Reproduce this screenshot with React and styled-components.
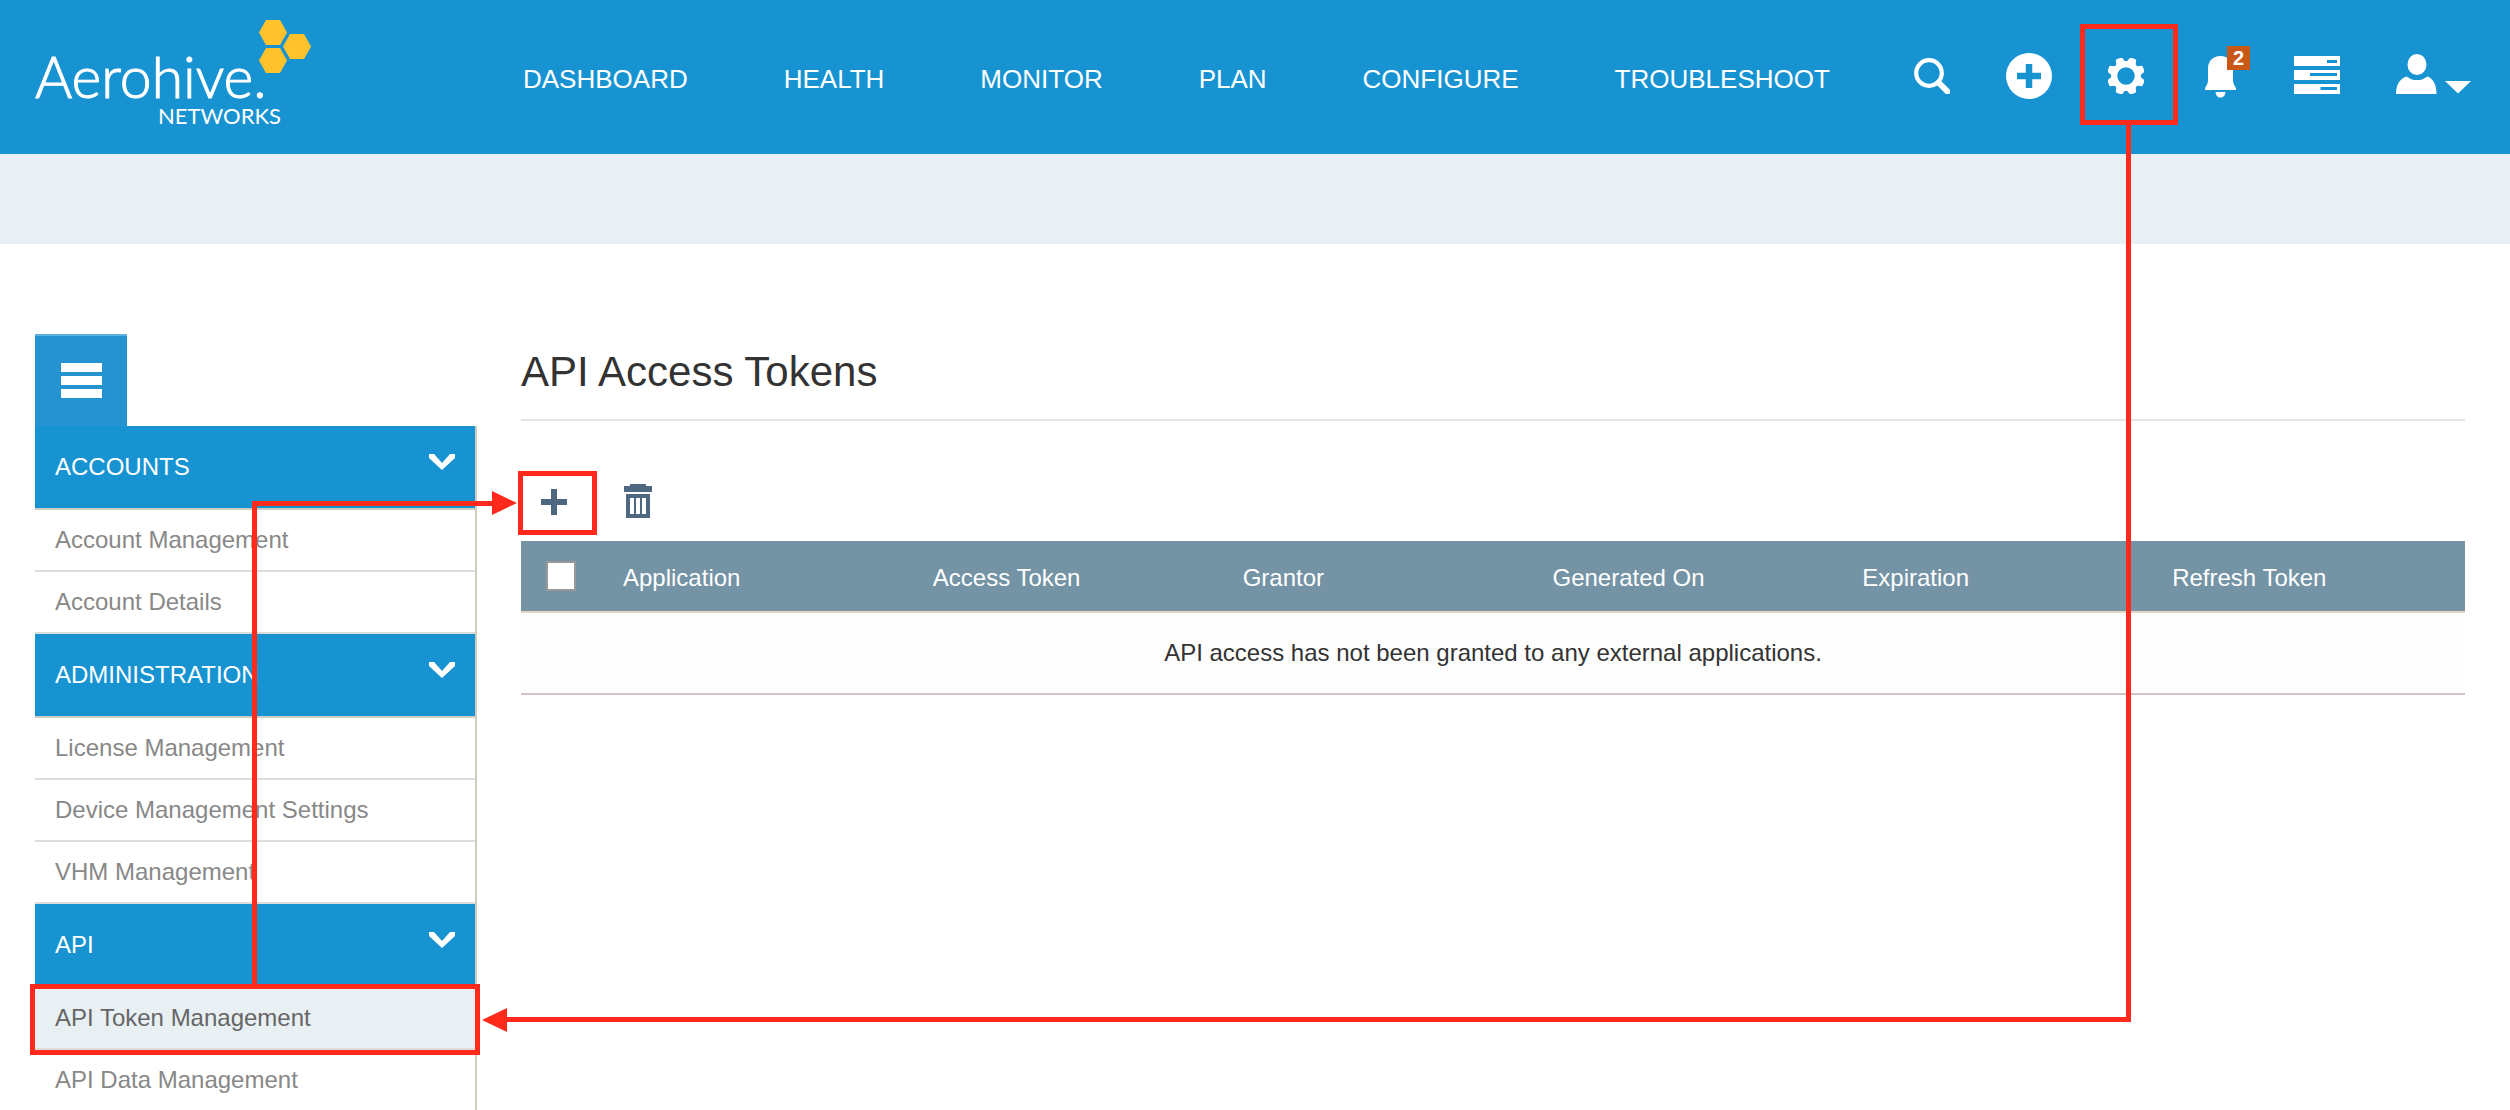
import React, { useState } from "react";
import styled, { createGlobalStyle, css } from "styled-components";

const color = {
  brand: "#1893d2",
  toggle: "#2493cf",
  band: "#e8f0f4",
  line: "#dedcd6",
  edge: "#cfcdc2",
  tableHead: "#7493a5",
  tool: "#4d6880",
  mark: "#ff2a1c",
};

const GlobalStyle = createGlobalStyle`
  *, *::before, *::after { box-sizing: border-box; }
  body {
    margin: 0;
    background: #fff;
    color: #333;
    font-family: "Liberation Sans", Arial, Helvetica, sans-serif;
    font-size: 24px;
    line-height: 28px;
  }
  button { font: inherit; border: 0; padding: 0; cursor: pointer; background: none; }
  svg { display: block; }
`;

const Page = styled.div`
  position: relative;
  min-height: 100vh;
`;

const Header = styled.header`
  display: flex;
  align-items: center;
  height: 154px;
  padding: 0 10px 0 35px;
  background: ${color.brand};
`;

const LogoLink = styled.a`
  flex: none;
  width: 488px;
`;

const Nav = styled.nav`
  display: flex;
  gap: 96px;
  padding-top: 3px;
`;

const NavLink = styled.a`
  color: #fff;
  font-size: 26px;
  line-height: 30px;
  text-decoration: none;
`;

const Actions = styled.div`
  display: flex;
  margin-left: auto;
  padding-bottom: 2px;
`;

const ActionButton = styled.button`
  position: relative;
  display: flex;
  align-items: center;
  justify-content: center;
  width: ${(p) => (p.$wide ? 132 : 97)}px;
  height: 102px;
`;

const Badge = styled.span`
  position: absolute;
  top: 21px;
  left: 53px;
  width: 23px;
  height: 24px;
  background: #c95718;
  color: #fff;
  font-size: 20px;
  font-weight: bold;
  line-height: 24px;
  text-align: center;
`;

const Band = styled.div`
  height: 90px;
  background: ${color.band};
`;

const Body = styled.div`
  display: flex;
  align-items: flex-start;
  gap: 44px;
  padding: 90px 45px 0 35px;
`;

const Sidebar = styled.aside`
  flex: none;
  width: 442px;
`;

const Toggle = styled.button`
  display: flex;
  align-items: center;
  justify-content: center;
  width: 92px;
  height: 92px;
  background: ${color.toggle};
  border-top: 2px solid #5cb0dc;
`;

const Menu = styled.div`
  border-right: 2px solid ${color.edge};
`;

const SectionButton = styled.button`
  display: flex;
  align-items: center;
  justify-content: space-between;
  width: 100%;
  height: 84px;
  padding: 0 20px;
  background: ${color.brand};
  border-bottom: 2px solid ${color.edge};
  color: #fff;
`;

const Items = styled.ul`
  margin: 0;
  padding: 0;
  list-style: none;
`;

const Item = styled.li`
  position: relative;
  height: 62px;
  border-bottom: 2px solid ${color.line};
  ${(p) => p.$last && css`
    height: 60px;
    border-bottom: 0;
  `}
`;

const ItemLink = styled.a`
  display: block;
  padding: 16px 20px;
  color: ${(p) => (p.$active ? "#666" : "#888")};
  background: ${(p) => (p.$active ? color.band : "transparent")};
  text-decoration: none;
`;

const Main = styled.main`
  flex: 1;
  min-width: 0;
`;

const Title = styled.h1`
  margin: 0;
  padding-bottom: 9px;
  border-bottom: 2px solid #e5e5e5;
  font-size: 42px;
  font-weight: normal;
  line-height: 76px;
`;

const Toolbar = styled.div`
  display: flex;
  gap: 18px;
  padding: 50px 0 9px;
`;

const ToolButton = styled.button`
  position: relative;
  display: flex;
  align-items: center;
  justify-content: center;
  width: 66px;
  height: 61px;
`;

const Table = styled.table`
  width: 100%;
  table-layout: fixed;
  border-collapse: separate;
  border-spacing: 0;
`;

const HeadCell = styled.th`
  height: 72px;
  padding: 3px 17px 0;
  background: ${color.tableHead};
  border-bottom: 2px solid #e3d6c2;
  color: #fff;
  font-weight: normal;
  text-align: left;
`;

const CheckCell = styled(HeadCell)`
  width: 85px;
  padding: 0 25px;
`;

const Check = styled.input`
  appearance: none;
  display: block;
  width: 30px;
  height: 30px;
  margin: 0;
  background: #fff;
  border: 2px solid #999;
`;

const EmptyCell = styled.td`
  height: 82px;
  padding: 0;
  background: #fdfdfd;
  border-bottom: 2px solid #cfc3c3;
  text-align: center;
`;

/* Red call-outs of the walkthrough, drawn over the page */
const Highlight = styled.span`
  position: absolute;
  z-index: 2;
  top: ${(p) => p.$top}px;
  left: ${(p) => p.$left}px;
  width: ${(p) => p.$width}px;
  height: ${(p) => p.$height}px;
  border: 5px solid ${color.mark};
  pointer-events: none;
`;

const Connector = styled.div`
  position: absolute;
  z-index: 1;
  border: 0 solid ${color.mark};
  pointer-events: none;

  &::after {
    content: "";
    position: absolute;
    border: solid transparent;
  }
`;

const GearToMenu = styled(Connector)`
  top: 125px;
  left: 500px;
  right: 379px;
  height: 897px;
  border-right-width: 5px;
  border-bottom-width: 5px;

  &::after {
    left: -18px;
    bottom: -15px;
    border-width: 12px 25px 12px 0;
    border-right-color: ${color.mark};
  }
`;

const MenuToAdd = styled(Connector)`
  top: 501px;
  left: 252px;
  width: 242px;
  height: 485px;
  border-top-width: 5px;
  border-left-width: 5px;

  &::after {
    right: -23px;
    top: -15px;
    border-width: 12px 0 12px 25px;
    border-left-color: ${color.mark};
  }
`;

const BrandLogo = () => (
  <svg width="282" height="116" viewBox="0 0 282 116" role="img" aria-label="Aerohive Networks">
    <g fill="#ffc22b">
      <path d="M231 1h14l7 12.500-7 12.500h-14l-7-12.500z" />
      <path d="M255 15h14l7 12.500-7 12.500h-14l-7-12.500z" />
      <path d="M231 29h14l7 12.500-7 12.500h-14l-7-12.500z" />
    </g>
    <text fill="#fff" fontFamily="Lato, sans-serif">
      <tspan x="0" y="79" fontSize="57" fontWeight="300" stroke="#fff" strokeWidth="1">Aerohive.</tspan>
      <tspan x="123" y="105" fontSize="22" stroke="#fff" strokeWidth="0">NETWORKS</tspan>
    </text>
  </svg>
);

const SearchIcon = () => (
  <svg width="36" height="36" viewBox="0 0 36 36" fill="none" stroke="#fff">
    <circle cx="15" cy="15" r="12.800" strokeWidth="4.200" />
    <path d="M24.500 24.500 33.500 33.500" strokeWidth="6" strokeLinecap="round" />
  </svg>
);

const AddCircleIcon = () => (
  <svg width="46" height="46" viewBox="0 0 46 46">
    <circle cx="23" cy="23" r="23" fill="#fff" />
    <path d="M23 11v24M11 23h24" stroke={color.brand} strokeWidth="6.500" strokeLinejoin="round" />
  </svg>
);

const GearIcon = () => (
  <svg width="36" height="36" viewBox="0 0 36 36">
    <circle cx="18" cy="18" r="11.800" fill="none" stroke="#fff" strokeWidth="6.200" />
    {[0, 1, 2, 3, 4, 5, 6, 7].map((n) => (
      <path key={n} d="M13 5.500 14.800-1h6.400L23 5.500z" fill="#fff" transform={`rotate(${22.5 + n * 45} 18 18)`} />
    ))}
  </svg>
);

const BellIcon = () => (
  <svg width="36" height="44" viewBox="0 0 36 44" fill="#fff">
    <path d="M15.500 2C8 2 3 7 3 14.500V27c0 3-3 6-3 8v1h31v-1c0-2-3-5-3-8V14.500C28 7 23 2 15.500 2z" />
    <path d="M10.500 38h10c-.5 4-2.500 5.500-5 5.500s-4.500-1.500-5-5.500z" />
  </svg>
);

const ServerIcon = () => (
  <svg width="52" height="40" viewBox="0 0 52 40">
    <path d="M0 0h46v10H0zM0 14h46v10H0zM0 28h46v10H0z" fill="#fff" />
    <path d="M33 4h10v3H33zM16 17h27v3H16zM26.500 31h16.500v3H26.500z" fill={color.brand} />
  </svg>
);

const UserIcon = () => (
  <svg width="76" height="44" viewBox="0 0 76 44" fill="#fff">
    <ellipse cx="21" cy="10.500" rx="9.500" ry="10.500" />
    <path d="M10.500 22.500c5 3 6 3.500 10.500 3.500s5.500-.5 10.500-3.500c6 2.500 9 8.500 9 17.500H0c0-9 3.500-15 10.500-17.500z" />
    <path d="M49 27h26L62 39.500z" />
  </svg>
);

const MenuIcon = () => (
  <svg width="41" height="36" viewBox="0 0 41 36" fill="#fff">
    <path d="M0 0h41v9H0zM0 13h41v9H0zM0 26h41v9H0z" />
  </svg>
);

const ChevronIcon = () => (
  <svg width="26" height="26" viewBox="0 0 26 26" fill="#fff">
    <path d="M0 0h5l8 9 8-9h5v4L13 16 0 4z" />
  </svg>
);

const PlusIcon = () => (
  <svg width="26" height="26" viewBox="0 0 26 26" stroke={color.tool} strokeWidth="6">
    <path d="M13 0v26M0 13h26" />
  </svg>
);

const TrashIcon = () => (
  <svg width="28" height="36" viewBox="0 0 28 36" fill={color.tool}>
    <path d="M0 2h6V0h16v2h6v6H0z" />
    <path fillRule="evenodd" d="M2 10h24v24H2zM6 14v16h4V14zM12 14v16h4V14zM18 14v16h4V14z" />
  </svg>
);

const navLinks = ["DASHBOARD", "HEALTH", "MONITOR", "PLAN", "CONFIGURE", "TROUBLESHOOT"];

const sections = [
  { name: "ACCOUNTS", items: ["Account Management", "Account Details"] },
  { name: "ADMINISTRATION", items: ["License Management", "Device Management Settings", "VHM Management"] },
  { name: "API", items: ["API Token Management", "API Data Management"] },
];

const columns = ["Application", "Access Token", "Grantor", "Generated On", "Expiration", "Refresh Token"];

export default function App() {
  const [checked, setChecked] = useState(false);
  const active = "API Token Management";

  return (
    <Page>
      <GlobalStyle />
      <Header>
        <LogoLink href="#home"><BrandLogo /></LogoLink>
        <Nav>
          {navLinks.map((name) => (
            <NavLink key={name} href={`#${name.toLowerCase()}`}>{name}</NavLink>
          ))}
        </Nav>
        <Actions>
          <ActionButton aria-label="Search"><SearchIcon /></ActionButton>
          <ActionButton aria-label="Add"><AddCircleIcon /></ActionButton>
          <ActionButton aria-label="Settings">
            <GearIcon />
            <Highlight $top={-1} $left={3} $width={98} $height={101} />
          </ActionButton>
          <ActionButton aria-label="Notifications">
            <BellIcon />
            <Badge>2</Badge>
          </ActionButton>
          <ActionButton aria-label="Devices"><ServerIcon /></ActionButton>
          <ActionButton $wide aria-label="User menu"><UserIcon /></ActionButton>
        </Actions>
      </Header>
      <Band />
      <Body>
        <Sidebar>
          <Toggle aria-label="Toggle menu"><MenuIcon /></Toggle>
          <Menu>
            {sections.map((section, s) => (
              <div key={section.name}>
                <SectionButton>
                  {section.name}
                  <ChevronIcon />
                </SectionButton>
                <Items>
                  {section.items.map((name, i) => (
                    <Item
                      key={name}
                      $last={s === sections.length - 1 && i === section.items.length - 1}
                    >
                      <ItemLink href="#settings" $active={name === active}>{name}</ItemLink>
                      {name === active && <Highlight $top={-4} $left={-5} $width={450} $height={71} />}
                    </Item>
                  ))}
                </Items>
              </div>
            ))}
          </Menu>
        </Sidebar>
        <Main>
          <Title>API Access Tokens</Title>
          <Toolbar>
            <ToolButton aria-label="Add token">
              <PlusIcon />
              <Highlight $top={0} $left={-3} $width={79} $height={64} />
            </ToolButton>
            <ToolButton aria-label="Delete token"><TrashIcon /></ToolButton>
          </Toolbar>
          <Table>
            <thead>
              <tr>
                <CheckCell>
                  <Check
                    type="checkbox"
                    aria-label="Select all tokens"
                    checked={checked}
                    onChange={(e) => setChecked(e.target.checked)}
                  />
                </CheckCell>
                {columns.map((name) => (
                  <HeadCell key={name} scope="col">{name}</HeadCell>
                ))}
              </tr>
            </thead>
            <tbody>
              <tr>
                <EmptyCell colSpan={columns.length + 1}>
                  API access has not been granted to any external applications.
                </EmptyCell>
              </tr>
            </tbody>
          </Table>
        </Main>
      </Body>
      <GearToMenu />
      <MenuToAdd />
    </Page>
  );
}
